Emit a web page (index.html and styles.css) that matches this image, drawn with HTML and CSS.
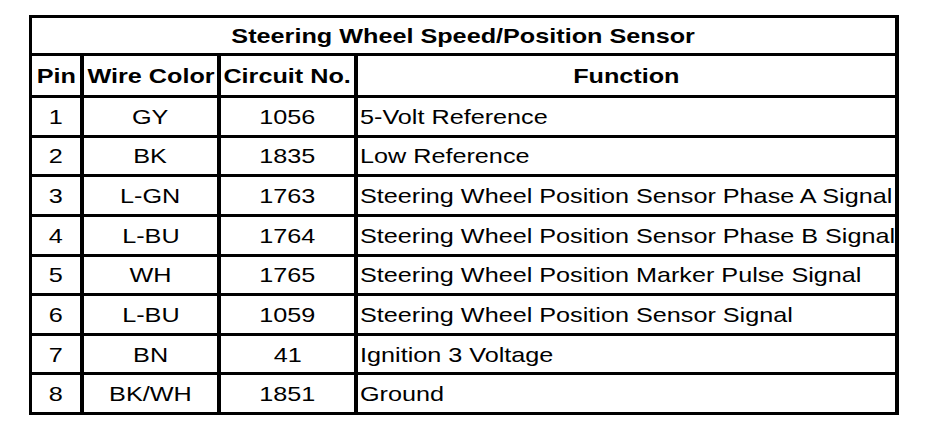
FILE: index.html
```html
<!DOCTYPE html>
<html>
<head>
<meta charset="utf-8">
<link rel="stylesheet" href="styles.css">
</head>
<body>
<div class="sheet">
  <div class="cell title"><span class="t">Steering Wheel Speed/Position Sensor</span></div>
  <div class="cell head"><span class="t">Pin</span></div>
  <div class="cell head"><span class="t">Wire Color</span></div>
  <div class="cell head"><span class="t">Circuit No.</span></div>
  <div class="cell head"><span class="t">Function</span></div>

  <div class="cell"><span class="t">1</span></div>
  <div class="cell"><span class="t">GY</span></div>
  <div class="cell"><span class="t">1056</span></div>
  <div class="cell fn"><span class="t">5-Volt Reference</span></div>

  <div class="cell"><span class="t">2</span></div>
  <div class="cell"><span class="t">BK</span></div>
  <div class="cell"><span class="t">1835</span></div>
  <div class="cell fn"><span class="t">Low Reference</span></div>

  <div class="cell"><span class="t">3</span></div>
  <div class="cell"><span class="t">L-GN</span></div>
  <div class="cell"><span class="t">1763</span></div>
  <div class="cell fn"><span class="t">Steering Wheel Position Sensor Phase A Signal</span></div>

  <div class="cell"><span class="t">4</span></div>
  <div class="cell"><span class="t">L-BU</span></div>
  <div class="cell"><span class="t">1764</span></div>
  <div class="cell fn"><span class="t">Steering Wheel Position Sensor Phase B Signal</span></div>

  <div class="cell"><span class="t">5</span></div>
  <div class="cell"><span class="t">WH</span></div>
  <div class="cell"><span class="t">1765</span></div>
  <div class="cell fn"><span class="t">Steering Wheel Position Marker Pulse Signal</span></div>

  <div class="cell"><span class="t">6</span></div>
  <div class="cell"><span class="t">L-BU</span></div>
  <div class="cell"><span class="t">1059</span></div>
  <div class="cell fn"><span class="t">Steering Wheel Position Sensor Signal</span></div>

  <div class="cell"><span class="t">7</span></div>
  <div class="cell"><span class="t">BN</span></div>
  <div class="cell"><span class="t">41</span></div>
  <div class="cell fn"><span class="t">Ignition 3 Voltage</span></div>

  <div class="cell"><span class="t">8</span></div>
  <div class="cell"><span class="t">BK/WH</span></div>
  <div class="cell"><span class="t">1851</span></div>
  <div class="cell fn"><span class="t">Ground</span></div>
</div>
</body>
</html>
```
FILE: styles.css
```css
html, body {
  margin: 0;
  padding: 0;
  background: #fff;
}

body {
  font-family: "Liberation Sans", Arial, sans-serif;
  font-size: 21px;
  color: #000;
}

.sheet {
  box-sizing: border-box;
  margin: 15px 0 0 29px;
  width: 870px;
  height: 400px;
  background: #000;
  padding: 3px 4px 3px 3px;
  display: grid;
  grid-template-columns: 48px 133px 133px 1fr;
  grid-template-rows: 35px 39px repeat(8, 1fr);
  column-gap: 4px;
  row-gap: 3px;
}

.cell {
  background: #fff;
  display: flex;
  align-items: center;
  justify-content: center;
  overflow: visible;
  white-space: nowrap;
  line-height: 24px;
  padding-top: 1px;
}

.t {
  display: inline-block;
  transform: scaleX(1.2);
  transform-origin: center;
}

.title {
  grid-column: 1 / 5;
  font-weight: bold;
}

.head {
  font-weight: bold;
}

.fn {
  justify-content: flex-start;
  padding-left: 2px;
}

.fn .t {
  transform-origin: left center;
}
```
